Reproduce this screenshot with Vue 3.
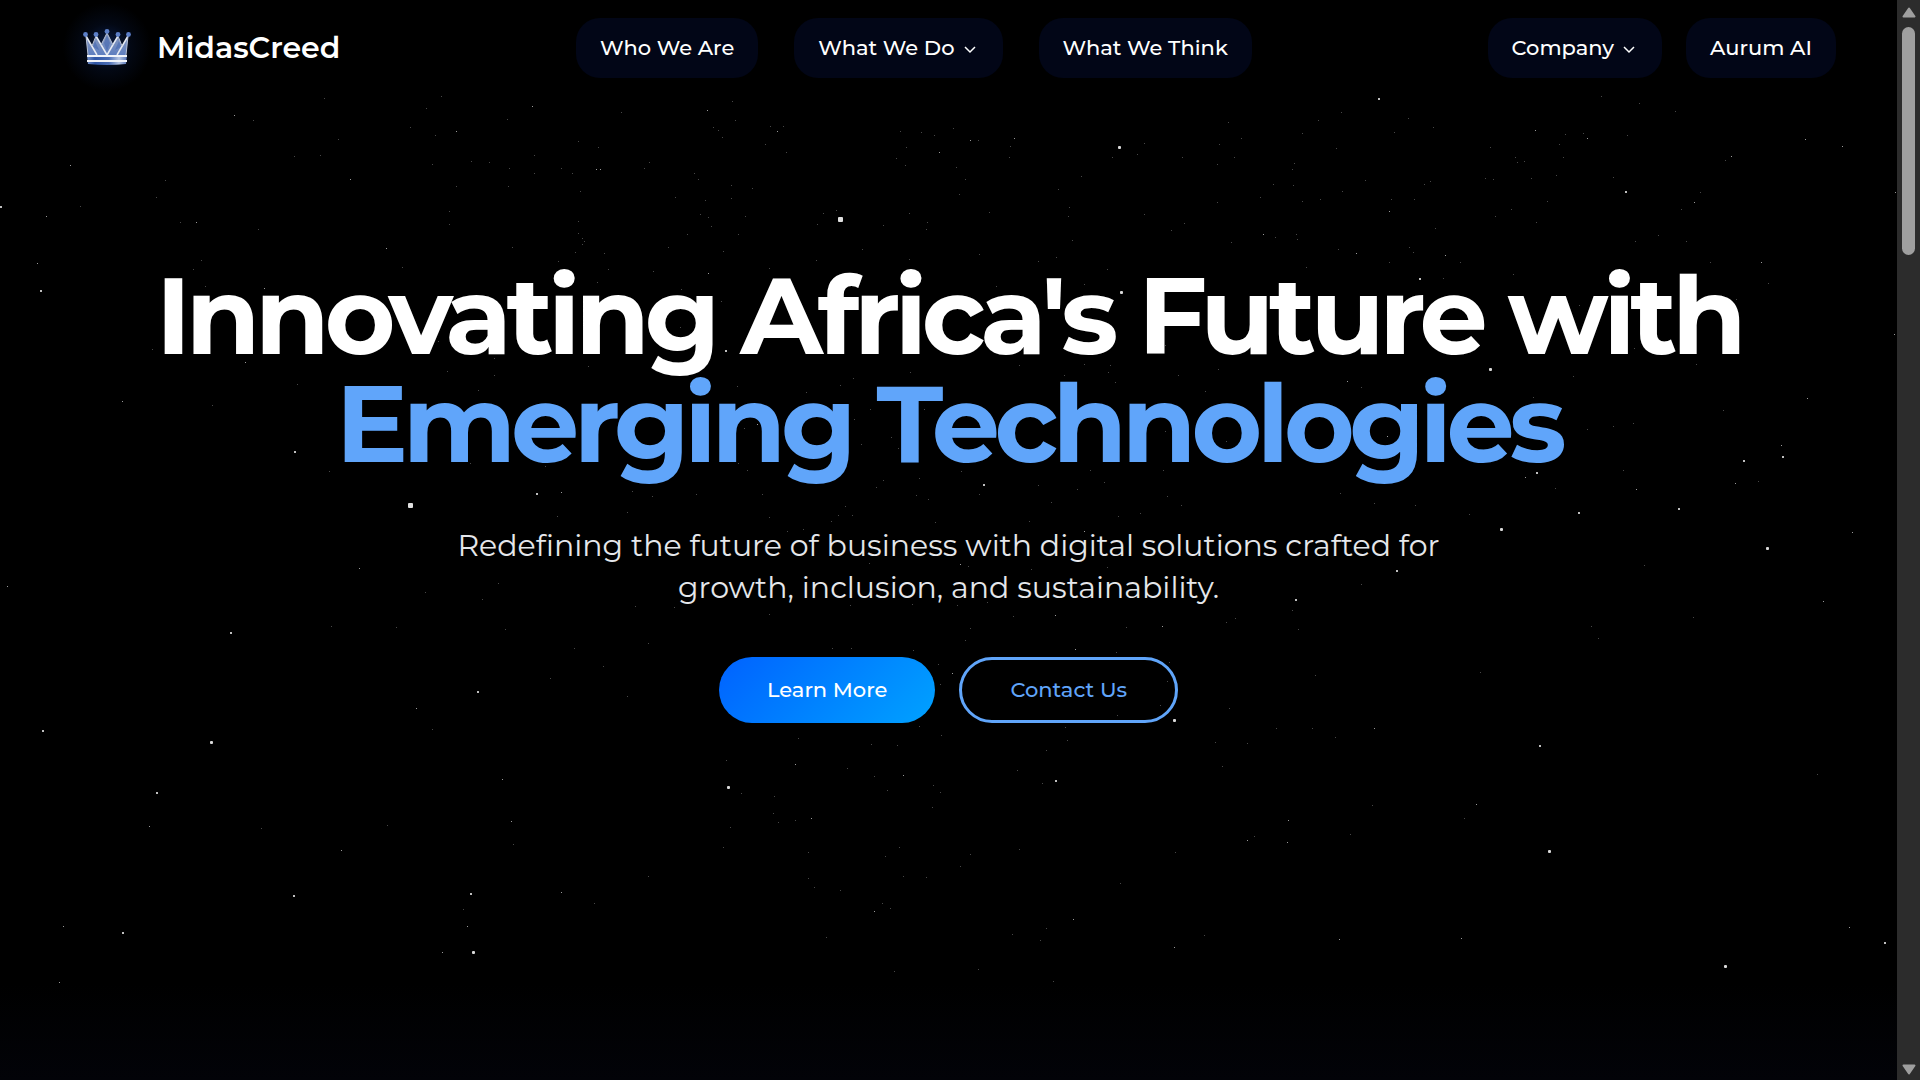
<script setup>
const sky = [
  {
    name: 'faint',
    size: 1,
    points:
      '324,98 441,96 426,108 253,120 507,119 410,127 435,135 338,139 578,141 598,147 621,112 294,156 320,155 534,155 471,161 489,162 432,164 509,168 561,168 534,173 572,173 165,180 456,186 508,186 580,191 156,197 80,206 449,211 449,224 180,222 258,229 578,221 578,233 582,238 584,241 582,244 512,247 575,252 604,253 201,260 558,261 193,269 402,267 608,269 205,286 597,282 152,349 438,341 494,358 447,371 494,375 588,366 297,384 478,390 212,405 329,471 470,463 545,466 632,491 627,512 557,516 ' +
      '732,101 735,120 713,127 718,130 722,137 770,126 783,126 765,144 786,152 900,131 921,132 953,128 934,135 906,147 978,140 1010,146 1009,157 896,158 905,165 956,167 1144,143 1137,154 1112,157 1228,122 1241,138 1219,144 1182,157 1234,157 1217,164 649,162 644,168 694,173 698,179 731,185 752,188 965,179 959,194 1081,176 1058,189 1273,184 1260,197 1217,202 675,197 705,200 731,198 700,214 708,217 745,216 711,226 836,210 823,213 817,224 909,213 927,222 926,229 883,225 989,212 1069,207 1068,216 1144,214 1184,223 1171,230 1275,237 1231,242 1072,240 979,254 687,234 738,234 668,247 723,251 862,249 816,260 909,259 1038,261 1056,257 653,271 769,268 1107,269 1084,284 996,286 681,289 721,301 680,327 1165,345 1019,365 1064,375 1084,364 1110,365 1108,372 1115,382 1178,375 1218,369 1205,391 910,372 853,378 840,385 737,386 806,392 870,409 854,419 744,428 861,444 891,437 898,448 924,409 1165,431 1145,431 1226,441 738,463 747,470 961,471 919,478 883,480 876,487 979,494 916,495 928,499 1038,485 1077,489 1090,470 1104,482 1163,470 1051,502 1167,496 1181,505 1140,513 1118,516 1029,521 935,522 845,506 838,515 852,515 831,521 769,517 762,494 696,494 652,496 787,531 803,529 ' +
      '1341,112 1318,120 1408,118 1433,127 1394,132 1302,133 1336,148 1490,147 1565,134 1583,133 1559,144 1601,96 1639,103 1675,111 1627,135 1563,157 1515,157 1517,162 1524,161 1725,160 1294,163 1292,169 1293,185 1365,180 1430,181 1424,184 1342,191 1485,178 1493,179 1531,178 1556,175 1613,177 1700,192 1320,199 1302,201 1391,199 1414,199 1547,201 1511,209 1495,216 1536,222 1681,209 1435,228 1296,234 1297,239 1338,249 1409,247 1413,252 1635,241 1658,235 1686,241 1710,262 1306,267 1389,262 1460,262 1443,278 1513,274 1768,283 1736,299 1579,305 1634,348 1696,364 1573,376 1361,387 1533,397 1723,410 1633,423 1613,426 1587,429 1623,470 1555,488 1758,481 1340,493 1374,503 1415,505 1469,514 ' +
      '498,583 425,592 482,599 635,606 331,626 396,627 505,629 574,648 603,666 550,678 432,729 627,696 261,828 387,825 513,844 594,903 463,909 ' +
      '968,566 869,563 1031,569 1107,567 674,607 769,614 850,605 912,604 957,605 987,602 1013,616 970,628 1126,627 1226,622 1235,618 965,640 648,643 832,648 851,648 913,650 1116,652 938,664 940,684 1169,662 1167,681 1160,705 1117,715 1229,708 1276,728 919,726 1065,727 941,735 798,738 871,744 897,745 1067,740 1215,742 1247,743 1046,750 726,760 847,768 874,776 1017,770 1222,766 1042,783 741,793 774,796 933,785 887,790 940,792 932,807 773,813 778,822 795,820 730,827 723,847 808,852 899,847 885,856 970,854 1019,849 1175,852 1254,836 960,866 903,876 926,877 648,876 808,878 814,887 840,890 1120,883 882,903 890,908 1046,928 1040,940 1012,934 1204,935 826,937 894,971 978,969 1053,981 ' +
      '1644,565 1361,584 1292,610 1298,629 1693,617 1591,626 1598,638 1480,672 1315,675 1312,728 1335,737 1817,774 1372,805 1464,818 1350,834'
  },
  {
    name: 'soft',
    size: 1,
    points:
      '532,106 234,115 456,131 70,165 596,169 600,169 350,179 46,216 196,222 386,248 37,263 264,288 245,362 122,401 561,492 707,110 777,131 939,152 970,140 1014,138 1263,234 708,273 757,424 1084,531 1535,130 1587,138 1805,139 1842,146 1731,156 1895,192 1389,211 1694,202 1356,253 1445,255 1761,262 1894,334 1347,381 1807,398 1387,436 1781,445 1525,477 1636,489 1735,483 1852,532 359,568 7,586 416,708 502,779 149,826 511,821 341,850 561,892 467,926 63,926 442,952 59,982 960,564 1055,615 1162,626 1075,649 952,673 795,764 903,775 811,818 1247,840 874,911 1073,919 1174,947 1823,601 1374,728 1476,804 1288,820 1287,842 1339,939 1461,938 1849,927'
  },
  {
    name: 'clear',
    size: 2,
    points:
      '0,206 40,290 294,451 536,493 725,350 983,484 1378,98 1625,191 1419,278 1782,456 1743,460 1536,472 1578,512 1678,508 230,632 477,691 42,730 156,792 293,895 470,893 122,932 1055,780 1396,570 1295,599 1539,745 1884,942'
  },
  {
    name: 'bright',
    size: 3,
    points:
      '1118,146 1120,291 1489,368 1500,528 1766,547 210,741 472,951 1173,719 727,786 1548,850 1724,965'
  },
  { name: 'near', size: 5, points: '838,217 408,503' }
].map((layer) => ({
  ...layer,
  stars: layer.points.split(' ').map((p) => p.split(',').map(Number))
}))

const mainLinks = [
  { label: 'Who We Are' },
  { label: 'What We Do', menu: true },
  { label: 'What We Think' }
]
const sideLinks = [
  { label: 'Company', menu: true },
  { label: 'Aurum AI' }
]
</script>

<template>
  <div class="frame">
    <div class="page">
      <svg class="sky" viewBox="0 0 1897 1080" preserveAspectRatio="xMidYMin slice" aria-hidden="true">
        <g v-for="layer in sky" :key="layer.name" :class="layer.name">
          <rect
            v-for="(star, i) in layer.stars"
            :key="i"
            :x="star[0]"
            :y="star[1]"
            :width="layer.size"
            :height="layer.size"
            :rx="layer.size > 2 ? 1 : 0"
          />
        </g>
      </svg>

      <header class="header">
        <a class="brand" href="#">
          <span class="mark">
            <svg class="crown" viewBox="0 0 48 36" aria-hidden="true">
              <defs>
                <linearGradient id="gem" x1="0" y1="0" x2="0" y2="1">
                  <stop offset="0" stop-color="#8b9bbd" />
                  <stop offset="1" stop-color="#5f7fc0" />
                </linearGradient>
                <linearGradient id="band" x1="0" y1="0" x2="1" y2="0">
                  <stop offset="0" stop-color="#6f8cc6" />
                  <stop offset="0.2" stop-color="#2f56a6" />
                  <stop offset="0.55" stop-color="#4a6db5" />
                  <stop offset="0.8" stop-color="#b4c4e2" />
                  <stop offset="1" stop-color="#5675b8" />
                </linearGradient>
              </defs>
              <path d="M3 7 14 26H5Z M13 7 24 26H14L9 18Z M24 4 30 16 24 26 18 16Z M35 7 39 18 34 26H24Z M45 7 43 26H34Z" fill="url(#gem)" />
              <path d="M12 12 16 21 10 18Z M24 6 27 14 24 22 21 14Z M36 12 38 18 32 21Z" fill="#4468b0" opacity="0.6" />
              <path d="M3 7 14 26 M13 7 24 26 M35 7 24 26 M45 7 34 26" fill="none" stroke="#e6eaf2" stroke-width="1.500" />
              <path d="M13 7 9 17 M24 4 18 16 M24 4 30 16 M35 7 39 17 M3 7 5 26 M45 7 43 26" fill="none" stroke="#b9c3d8" stroke-width="1" />
              <path d="M4 26H44L43 35Q24 37 5 35Z" fill="url(#band)" />
              <path d="M4 27H44M4 32H44" stroke="#f1f4fa" stroke-width="1.800" />
              <g fill="#5c7fc8">
                <circle cx="2.500" cy="5.500" r="2.400" />
                <circle cx="13" cy="5.500" r="2.400" />
                <circle cx="24" cy="2.400" r="2.400" />
                <circle cx="35" cy="5.500" r="2.400" />
                <circle cx="45.500" cy="5.500" r="2.400" />
              </g>
            </svg>
          </span>
          <span class="name">MidasCreed</span>
        </a>

        <nav class="links main-links" aria-label="Main">
          <a v-for="link in mainLinks" :key="link.label" href="#" class="pill">
            {{ link.label }}
            <svg v-if="link.menu" class="chevron" viewBox="0 0 16 8" aria-hidden="true">
              <path d="M2 1 7 6 12 1" />
            </svg>
          </a>
        </nav>

        <nav class="links" aria-label="Company">
          <a v-for="link in sideLinks" :key="link.label" href="#" class="pill">
            {{ link.label }}
            <svg v-if="link.menu" class="chevron" viewBox="0 0 16 8" aria-hidden="true">
              <path d="M2 1 7 6 12 1" />
            </svg>
          </a>
        </nav>
      </header>

      <main class="hero">
        <h1>Innovating Africa's Future with <span class="accent">Emerging Technologies</span></h1>
        <p>
          Redefining the future of business with digital solutions crafted for<br />
          growth, inclusion, and sustainability.
        </p>
        <div class="actions">
          <button type="button" class="cta filled">Learn More</button>
          <button type="button" class="cta outlined">Contact Us</button>
        </div>
      </main>
    </div>

    <div class="scrollbar" aria-hidden="true">
      <svg class="arrow" viewBox="0 0 14 11"><path d="M7 1.500 12.500 9.500H1.500Z" /></svg>
      <span class="thumb"></span>
      <svg class="arrow down" viewBox="0 0 14 11"><path d="M7 9.500 12.500 1.500H1.500Z" /></svg>
    </div>
  </div>
</template>

<style>
body {
  background: #000;
}
</style>

<style scoped>
.frame {
  display: flex;
  height: 100vh;
  overflow: hidden;
  background: #000;
  color: #fff;
  font-family: Montserrat, Inter, sans-serif;
}

.page {
  position: relative;
  flex: 1;
  min-width: 0;
  background: linear-gradient(to bottom, #000 91%, #020308);
}

.sky {
  position: absolute;
  inset: 0;
  width: 100%;
  height: 100%;
  fill: #fff;
}

.faint { opacity: 0.28; }
.soft { opacity: 0.6; }
.clear { opacity: 0.75; }
.bright { opacity: 0.85; }
.near { opacity: 0.88; }

.header {
  position: relative;
  display: flex;
  align-items: center;
  justify-content: space-between;
  height: 96px;
  padding: 0 61px;
}

.brand {
  display: flex;
  align-items: center;
  gap: 4px;
  color: #fff;
  text-decoration: none;
}

.mark {
  display: flex;
  flex: none;
  align-items: center;
  justify-content: center;
  width: 92px;
  height: 92px;
  margin-bottom: 2px;
  background: radial-gradient(circle, rgba(22, 62, 150, 0.5), rgba(14, 40, 100, 0.2) 36%, transparent 68%);
}

.crown {
  width: 48px;
  height: 36px;
}

.name {
  font-size: 30px;
  font-weight: 600;
  line-height: 36px;
}

.links {
  display: flex;
  gap: 24px;
}

.main-links {
  gap: 36px;
}

.pill {
  display: flex;
  box-sizing: border-box;
  align-items: center;
  gap: 8px;
  height: 60px;
  padding: 0 24px 2px;
  border-radius: 24px;
  background: #020617;
  color: #fff;
  font-size: 21px;
  font-weight: 500;
  text-decoration: none;
  white-space: nowrap;
}

.chevron {
  width: 16px;
  height: 8px;
  margin-top: 6px;
  fill: none;
  stroke: #fff;
  stroke-width: 1.5;
}

.hero {
  position: relative;
  display: flex;
  flex-direction: column;
  align-items: center;
  padding-top: 165px;
  text-align: center;
}

h1 {
  margin: 0;
  font-size: 108px;
  font-weight: 700;
  line-height: 108px;
  letter-spacing: -0.05em;
}

.accent {
  display: block;
  color: #60a5fa;
}

p {
  margin: 48px 0 0;
  color: #e5e7eb;
  font-size: 30px;
  line-height: 42px;
}

.actions {
  display: flex;
  gap: 24px;
  margin-top: 48px;
}

.cta {
  box-sizing: border-box;
  height: 66px;
  padding: 0 48px 2px;
  border: 0;
  border-radius: 33px;
  font-family: inherit;
  font-size: 21px;
  font-weight: 500;
}

.filled {
  background: linear-gradient(135deg, #0062ff, #00a2ff);
  color: #fff;
}

.outlined {
  border: 3px solid #60a5fa;
  background: transparent;
  color: #60a5fa;
}

.scrollbar {
  display: flex;
  flex-direction: column;
  align-items: center;
  width: 23px;
  background: #2c2c2c;
}

.arrow {
  width: 14px;
  height: 11px;
  margin: 7px 0 9px;
  fill: #9f9f9f;
  stroke: #9f9f9f;
  stroke-width: 2;
  stroke-linejoin: round;
}

.thumb {
  width: 13px;
  height: 228px;
  border-radius: 7px;
  background: #9f9f9f;
}

.down {
  margin: auto 0 5px;
}
</style>
